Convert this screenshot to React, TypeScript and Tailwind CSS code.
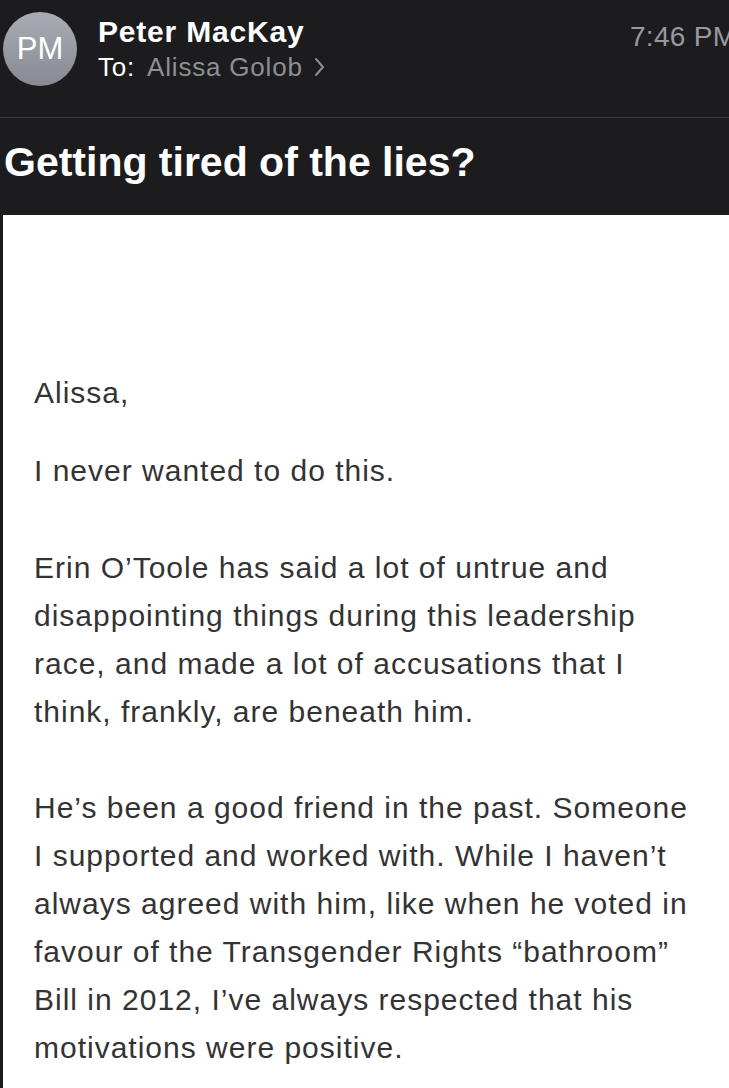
export default function App() {
  return (
    <div className="w-[729px] h-[1088px] overflow-hidden bg-[#1c1c1e] font-['Liberation_Sans',Arial,sans-serif]">
      {/* header */}
      <div className="h-[118px] border-b border-[#3a3a3c] flex pl-[3px] pt-[12px] relative">
        <div className="w-[74px] h-[74px] rounded-full bg-gradient-to-b from-[#a9acb3] to-[#878a92] flex items-center justify-center text-white text-[31px]">
          PM
        </div>
        <div className="ml-[21px] pt-[2px]">
          <div className="text-white text-[30px] font-bold leading-[36px] tracking-[0.8px]">Peter MacKay</div>
          <div className="flex items-center mt-[2px] text-[26px] leading-[30px] tracking-[0.8px]">
            <span className="text-white">To:</span>
            <span className="ml-[12px] text-[#8e8e93]">Alissa Golob</span>
            <svg className="ml-[11px]" width="11" height="20" viewBox="0 0 11 20" fill="none">
              <polyline points="2,2 9,10 2,18" stroke="#8e8e93" strokeWidth="2" strokeLinecap="round" strokeLinejoin="round" />
            </svg>
          </div>
        </div>
        <div className="absolute left-[630px] top-[16px] whitespace-nowrap text-[28px] tracking-[0.3px] text-[#98989d]">7:46 PM</div>
      </div>

      {/* subject */}
      <div className="h-[97px] pl-[4px] pt-[20px]">
        <h1 className="text-white text-[41px] font-bold leading-[48px]">Getting tired of the lies?</h1>
      </div>

      {/* message body */}
      <div className="ml-[3px] bg-white h-[900px] pl-[31px] pt-[154px] text-[#333333] text-[30px] leading-[48px] tracking-[1px]">
        <p>Alissa,</p>
        <p className="mt-[30px]">I never wanted to do this.</p>
        <p className="mt-[49px]">
          Erin O’Toole has said a lot of untrue and
          <br />
          disappointing things during this leadership
          <br />
          race, and made a lot of accusations that I
          <br />
          think, frankly, are beneath him.
        </p>
        <p className="mt-[48px]">
          He’s been a good friend in the past. Someone
          <br />
          I supported and worked with. While I haven’t
          <br />
          always agreed with him, like when he voted in
          <br />
          favour of the Transgender Rights “bathroom”
          <br />
          Bill in 2012, I’ve always respected that his
          <br />
          motivations were positive.
        </p>
      </div>
    </div>
  );
}
